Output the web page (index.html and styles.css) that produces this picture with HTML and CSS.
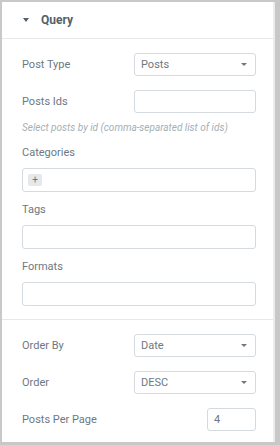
FILE: index.html
```html
<!DOCTYPE html>
<html lang="en">
<head>
    <meta charset="UTF-8">
    <meta name="viewport" content="width=device-width, initial-scale=1.0">
    <title>Query Controls</title>
    <link rel="stylesheet" href="styles.css">
</head>
<body>

    <div class="panel">
        <!-- Section header -->
        <div class="panel-header">
            <span class="caret"></span>
            <span class="panel-title">Query</span>
        </div>

        <!-- Source controls -->
        <div class="section">
            <div class="control inline">
                <label>Post Type</label>
                <div class="select">
                    <span>Posts</span>
                    <span class="select-caret"></span>
                </div>
            </div>
            <div class="control inline no-gap">
                <label>Posts Ids</label>
                <div class="input"></div>
            </div>
            <p class="help">Select posts by id (comma-separated list of ids)</p>

            <div class="control block">
                <label>Categories</label>
                <div class="input wide">
                    <span class="tag-add">+</span>
                </div>
            </div>
            <div class="control block">
                <label>Tags</label>
                <div class="input wide"></div>
            </div>
            <div class="control block last">
                <label>Formats</label>
                <div class="input wide"></div>
            </div>
        </div>

        <!-- Ordering controls -->
        <div class="section">
            <div class="control inline">
                <label>Order By</label>
                <div class="select">
                    <span>Date</span>
                    <span class="select-caret"></span>
                </div>
            </div>
            <div class="control inline">
                <label>Order</label>
                <div class="select">
                    <span>DESC</span>
                    <span class="select-caret"></span>
                </div>
            </div>
            <div class="control inline last">
                <label>Posts Per Page</label>
                <div class="input number">4</div>
            </div>
        </div>
    </div>

</body>
</html>
```

FILE: styles.css
```css
body {
    margin: 0;
    background-color: #c8c8c8;
    font-family: Roboto, "Liberation Sans", sans-serif;
    color: #6d7882;
}
.panel {
    width: 273px;
    height: 440px;
    margin: 2px 0 0 2px;
    background-color: white;
    border-right: 2px solid #ececec;
    box-sizing: border-box;
    overflow: hidden;
}
.panel-header {
    height: 36px;
    display: flex;
    align-items: center;
    padding-left: 21px;
    border-bottom: 1px solid #e6e9ec;
}
.caret {
    width: 0;
    height: 0;
    border-left: 3px solid transparent;
    border-right: 3px solid transparent;
    border-top: 4px solid #556068;
    margin-right: 12px;
}
.panel-title {
    font-size: 12px;
    font-weight: bold;
    color: #556068;
}
.section {
    padding: 14px 17px 13px 20px;
    border-bottom: 1px solid #e6e9ec;
}
.section:last-child {
    border-bottom: none;
}
.control label {
    font-size: 11px;
    line-height: 14px;
}
.control.inline {
    display: flex;
    justify-content: space-between;
    align-items: center;
    margin-bottom: 14px;
}
.control.block {
    margin-bottom: 11px;
}
.control.block label {
    display: block;
    margin-bottom: 8px;
}
.control.no-gap,
.control.last {
    margin-bottom: 0;
}
.select,
.input {
    width: 122px;
    height: 23px;
    box-sizing: border-box;
    border: 1px solid #d5dadf;
    border-radius: 3px;
    font-size: 11px;
    color: #6d7882;
}
.select {
    display: flex;
    align-items: center;
    justify-content: space-between;
    padding: 0 8px 0 6px;
}
.select-caret {
    width: 0;
    height: 0;
    border-left: 3px solid transparent;
    border-right: 3px solid transparent;
    border-top: 3px solid #6d7882;
}
.input.wide {
    width: 234px;
    height: 24px;
    display: flex;
    align-items: center;
    padding-left: 5px;
}
.input.number {
    width: 49px;
    display: flex;
    align-items: center;
    padding-left: 6px;
}
.tag-add {
    width: 14px;
    height: 12px;
    line-height: 12px;
    text-align: center;
    background-color: #e6e9ec;
    font-size: 10px;
    border-radius: 2px;
}
.help {
    margin: 8px 0 11px;
    font-size: 10px;
    line-height: 14px;
    font-style: italic;
    color: #a4afb7;
}
```
